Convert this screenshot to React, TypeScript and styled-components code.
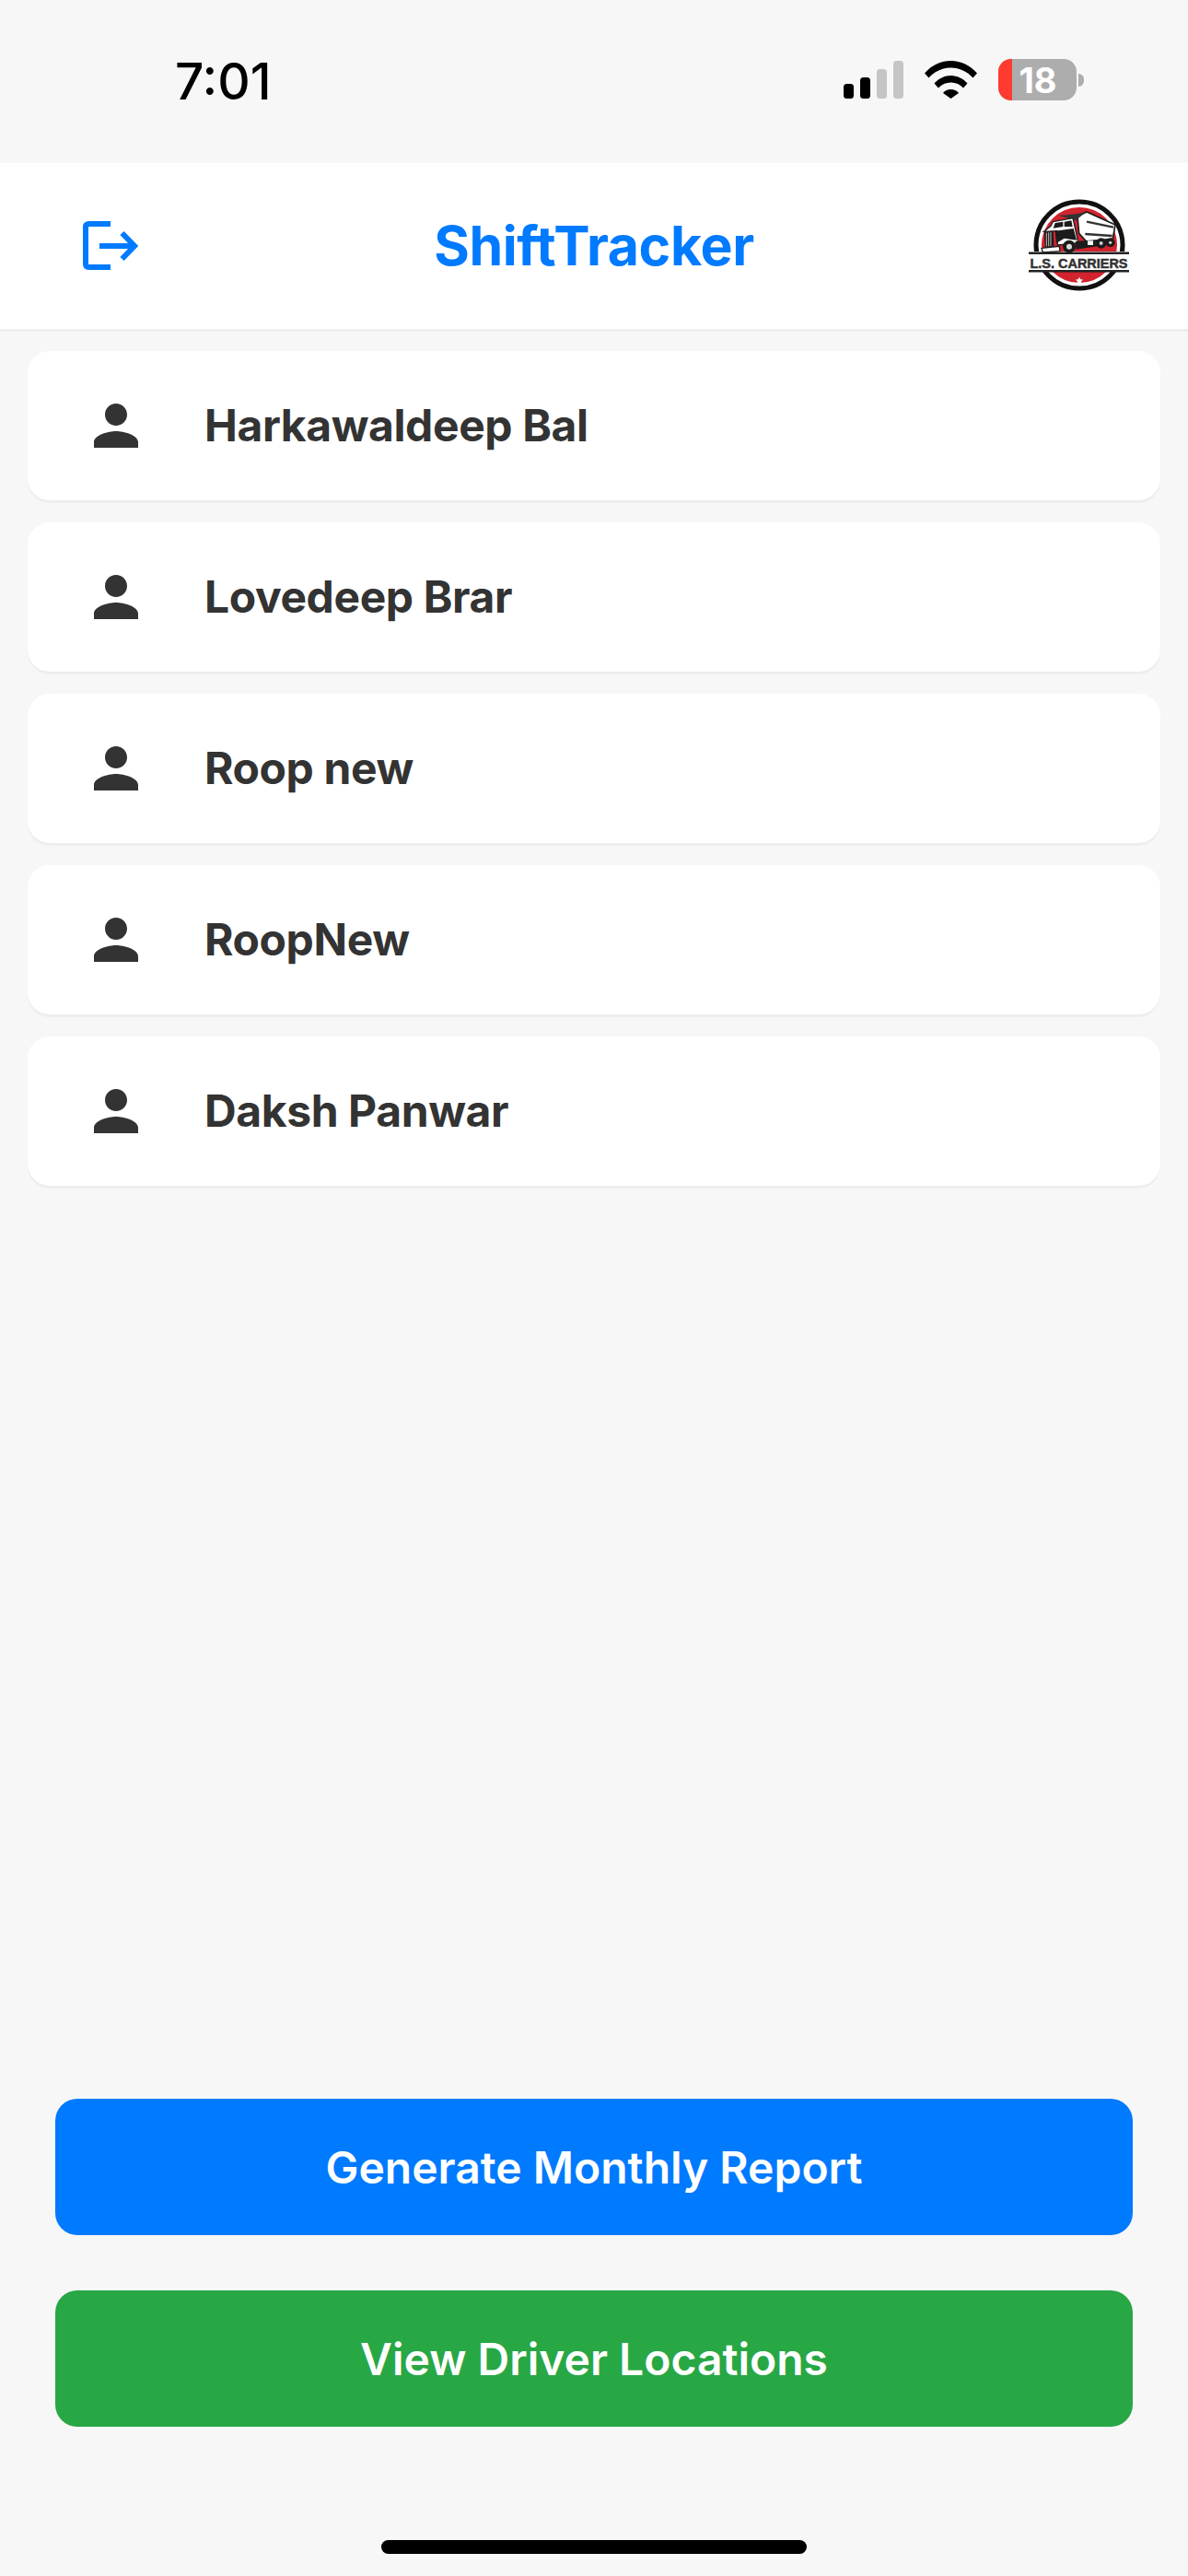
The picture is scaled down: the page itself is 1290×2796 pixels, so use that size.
import React from 'react';
import styled, { createGlobalStyle } from 'styled-components';
import { MdPerson } from 'react-icons/md';

const drivers = ['Harkawaldeep Bal', 'Lovedeep Brar', 'Roop new', 'RoopNew', 'Daksh Panwar'];

const GlobalStyle = createGlobalStyle`
  html, body {
    margin: 0;
    padding: 0;
    background: #f7f7f7;
  }
  * {
    box-sizing: border-box;
  }
`;

const Page = styled.div`
  width: 1290px;
  height: 2796px;
  display: flex;
  flex-direction: column;
  background: #f7f7f7;
  font-family: Inter, 'Liberation Sans', sans-serif;
  overflow: hidden;
`;

const StatusBar = styled.div`
  height: 177px;
  flex: none;
  display: flex;
  justify-content: space-between;
  padding: 64px 113px 0 190px;
`;

const Clock = styled.span`
  font-size: 55px;
  line-height: 48px;
  height: 48px;
  font-weight: 500;
  color: #000;
`;

const StatusIcons = styled.div`
  display: flex;
  align-items: flex-start;
  gap: 23px;
`;

const BatteryWrap = styled.div`
  display: flex;
  align-items: center;
  gap: 2px;
`;

const Battery = styled.div`
  position: relative;
  width: 85px;
  height: 45px;
  border-radius: 14px;
  overflow: hidden;
  background: #adadad;
  display: flex;
  align-items: center;
  justify-content: center;
  color: #fff;
  font-size: 38px;
  font-weight: 700;
`;

const BatteryLevel = styled.div`
  position: absolute;
  left: 0;
  top: 0;
  bottom: 0;
  width: 15px;
  background: #ff3b30;
`;

const BatteryLabel = styled.span`
  position: relative;
  padding-left: 1px;
`;

const BatteryNub = styled.div`
  width: 6px;
  height: 14px;
  background: #adadad;
  border-radius: 0 7px 7px 0;
`;

const Header = styled.header`
  height: 183px;
  flex: none;
  display: grid;
  grid-template-columns: 1fr auto 1fr;
  align-items: center;
  padding: 0 64px;
  background: #fff;
  border-bottom: 3px solid #eeeeee;
`;

const LogoutButton = styled.div`
  justify-self: start;
  margin-left: 26px;
  display: flex;
`;

const Title = styled.h1`
  margin: 0;
  font-size: 59px;
  line-height: 70px;
  font-weight: 700;
  letter-spacing: -0.4px;
  color: #007aff;
`;

const LogoWrap = styled.div`
  justify-self: end;
  display: flex;
`;

const DriverList = styled.main`
  display: flex;
  flex-direction: column;
  gap: 24px;
  padding: 21px 30px 0;
`;

const DriverCard = styled.div`
  height: 162px;
  display: flex;
  align-items: center;
  gap: 60px;
  padding-left: 60px;
  background: #fff;
  border-radius: 24px;
  box-shadow: 0 3px 1px rgba(0, 0, 0, 0.04);
  color: #333;
`;

const DriverName = styled.span`
  font-size: 48px;
  font-weight: 650;
  letter-spacing: -0.4px;
  padding-bottom: 2px;
`;

const Footer = styled.footer`
  margin-top: auto;
  display: flex;
  flex-direction: column;
  align-items: center;
  padding: 0 60px 24px;
`;

const ActionButton = styled.button<{ $bg: string }>`
  width: 100%;
  height: 148px;
  margin-bottom: 60px;
  border: none;
  border-radius: 24px;
  background: ${({ $bg }) => $bg};
  color: #fff;
  font-family: inherit;
  font-size: 48px;
  font-weight: 600;
`;

const SecondAction = styled(ActionButton)`
  margin-bottom: 123px;
`;

const HomeIndicator = styled.div`
  width: 462px;
  height: 15px;
  border-radius: 8px;
  background: #000;
`;

const SignalIcon = () => (
  <svg width="65" height="41" viewBox="0 0 65 41" style={{ marginTop: 2 }}>
    <rect x="0" y="25" width="11" height="16" rx="3.5" fill="#000" />
    <rect x="18" y="18" width="11" height="23" rx="3.5" fill="#000" />
    <rect x="36" y="9" width="11" height="32" rx="3.5" fill="#c5c5c5" />
    <rect x="54" y="0" width="11" height="41" rx="3.5" fill="#c5c5c5" />
  </svg>
);

const WifiIcon = () => (
  <svg width="57" height="41" viewBox="0 0 57 41" style={{ marginTop: 2 }}>
    <path d="M0 13.5C7.5 5 17.5 0 28.5 0S49.5 5 57 13.5L52.5 18.5C46 11.5 38 7.5 28.5 7.5S11 11.5 4.5 18.5Z" fill="#000" />
    <path d="M10.5 24.5C15 19.5 21.5 16 28.5 16S42 19.5 46.5 24.5L42 29.5C38.5 25.8 33.8 23.5 28.5 23.5S18.5 25.8 15 29.5Z" fill="#000" />
    <path d="M20 35C22 32.5 25 31 28.5 31S35 32.5 37 35L28.5 41Z" fill="#000" />
  </svg>
);

const LogoutIcon = () => (
  <svg width="60" height="54" viewBox="0 0 60 54" fill="none" stroke="#007aff" strokeWidth="6">
    <path d="M30 3H6.5Q3 3 3 6.5V46.5Q3 50 6.5 50H30" />
    <path d="M18 27H55" />
    <path d="M42.5 13L56 27L42.5 41" />
  </svg>
);

const CarrierLogo = () => (
  <svg width="110" height="100" viewBox="16 12 110 100" overflow="visible">
    <circle cx="72" cy="61" r="47" fill="#fff" stroke="#111" strokeWidth="5" />
    <circle cx="72" cy="61" r="41" fill="#d2232f" />
    <rect x="16" y="68" width="110" height="21" fill="#fff" />
    {/* truck, drawn on a 3x grid */}
    <g transform="translate(25 15) scale(0.3333)">
      <path d="M135 45L165 30L258 72L250 118L165 128L140 100Z" fill="#fff" stroke="#1c1c1c" strokeWidth="5" />
      <path d="M165 62L252 80" stroke="#333" strokeWidth="7" />
      <path d="M160 102L248 108" stroke="#333" strokeWidth="8" />
      <path d="M75 42L135 36L162 30L130 58Z" fill="#333" />
      <path d="M55 62L120 50L138 132L70 138L68 92L26 94L48 76Z" fill="#fff" stroke="#1c1c1c" strokeWidth="4" />
      <path d="M62 66L88 62L88 78L56 83Z" fill="#1c1c1c" />
      <path d="M92 62L115 58L119 78L92 78Z" fill="#1c1c1c" />
      <path d="M27 96L56 93L58 141L29 146Z" fill="#1c1c1c" />
      <path d="M34 98V142M41 97V142M48 96V141" stroke="#ddd" strokeWidth="2.5" />
      <path d="M62 92L122 84L132 122L92 116L66 132Z" fill="#1c1c1c" />
      <path d="M128 126L252 116L252 134L130 152Z" fill="#1c1c1c" />
      <rect x="168" y="124" width="18" height="14" fill="#fff" />
      <path d="M18 148L76 142L78 158L22 162Z" fill="#fff" stroke="#1c1c1c" strokeWidth="4" />
      <circle cx="108" cy="143" r="21" fill="#1c1c1c" />
      <circle cx="108" cy="143" r="9" fill="#ddd" />
      <circle cx="212" cy="132" r="17" fill="#1c1c1c" />
      <circle cx="212" cy="132" r="6" fill="#ccc" />
      <circle cx="242" cy="130" r="15" fill="#1c1c1c" />
      <circle cx="242" cy="130" r="5" fill="#ccc" />
    </g>
    <rect x="17" y="68.5" width="109" height="2.5" fill="#222" />
    <rect x="17" y="88" width="109" height="2.5" fill="#222" />
    <text x="71.5" y="85.5" textAnchor="middle" textLength="106" lengthAdjust="spacingAndGlyphs" fontFamily="'Liberation Sans', sans-serif" fontWeight="700" fontSize="15" stroke="#333" strokeWidth="0.5" fill="#333">
      L.S. CARRIERS
    </text>
    <path d="M72 95.5l1.2 2.7 2.9.3-2.2 1.900.7 2.900-2.600-1.500-2.600 1.500.7-2.900-2.200-1.900 2.900-.3Z" fill="#fff" />
  </svg>
);

export default function App() {
  return (
    <Page>
      <GlobalStyle />
      <StatusBar>
        <Clock>7:01</Clock>
        <StatusIcons>
          <SignalIcon />
          <WifiIcon />
          <BatteryWrap>
            <Battery>
              <BatteryLevel />
              <BatteryLabel>18</BatteryLabel>
            </Battery>
            <BatteryNub />
          </BatteryWrap>
        </StatusIcons>
      </StatusBar>

      <Header>
        <LogoutButton>
          <LogoutIcon />
        </LogoutButton>
        <Title>ShiftTracker</Title>
        <LogoWrap>
          <CarrierLogo />
        </LogoWrap>
      </Header>

      <DriverList>
        {drivers.map((name) => (
          <DriverCard key={name}>
            <MdPerson size={72} color="#333" />
            <DriverName>{name}</DriverName>
          </DriverCard>
        ))}
      </DriverList>

      <Footer>
        <ActionButton $bg="#007aff">Generate Monthly Report</ActionButton>
        <SecondAction $bg="#28a745">View Driver Locations</SecondAction>
        <HomeIndicator />
      </Footer>
    </Page>
  );
}
